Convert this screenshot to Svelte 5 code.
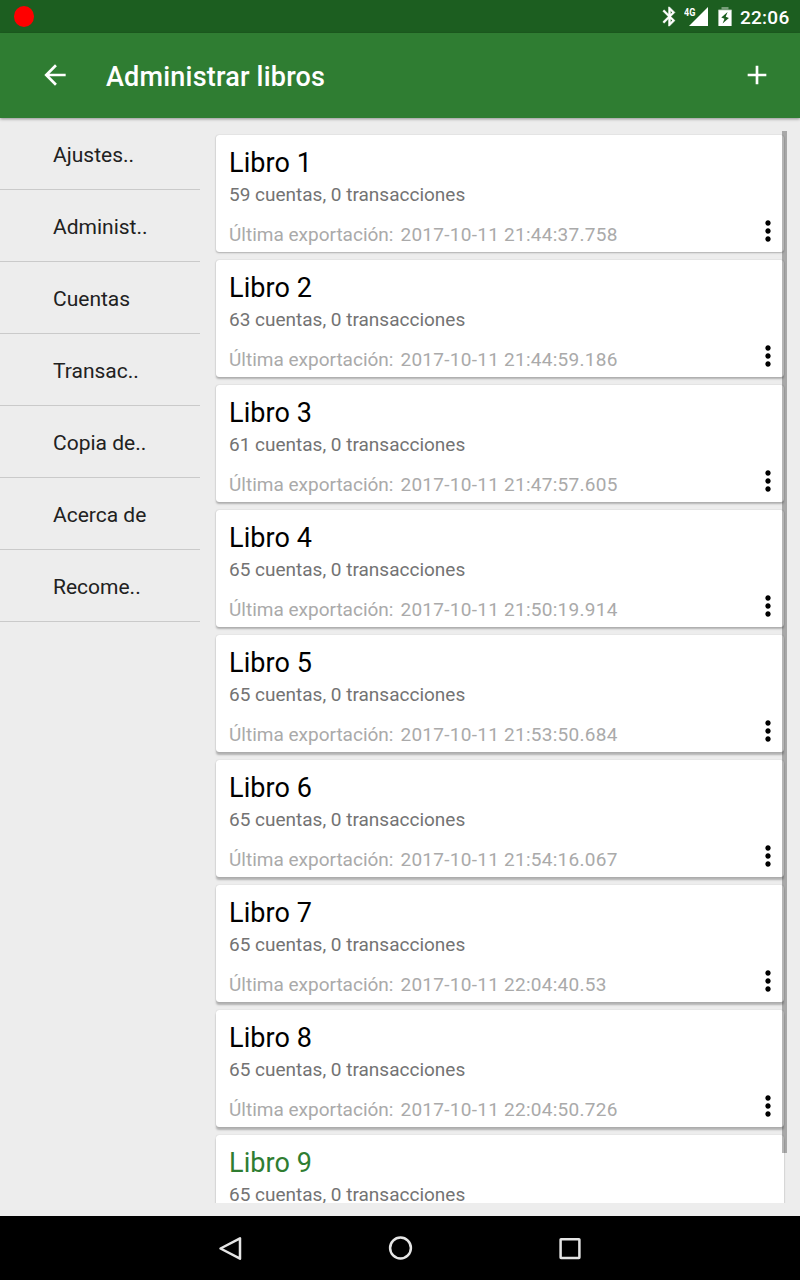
<script>
  const menu = ['Ajustes..', 'Administ..', 'Cuentas', 'Transac..', 'Copia de..', 'Acerca de', 'Recome..'];
  const books = [
    { accounts: 59, exported: '2017-10-11 21:44:37.758' },
    { accounts: 63, exported: '2017-10-11 21:44:59.186' },
    { accounts: 61, exported: '2017-10-11 21:47:57.605' },
    { accounts: 65, exported: '2017-10-11 21:50:19.914' },
    { accounts: 65, exported: '2017-10-11 21:53:50.684' },
    { accounts: 65, exported: '2017-10-11 21:54:16.067' },
    { accounts: 65, exported: '2017-10-11 22:04:40.53' },
    { accounts: 65, exported: '2017-10-11 22:04:50.726' },
    { accounts: 65, exported: '', active: true }
  ];
</script>

<div class="screen">
  <div class="status">
    <span class="record"></span>
    <svg class="bt" width="23" height="23" viewBox="0 0 24 24"><path fill="#fff" stroke="#fff" stroke-width=".5" d="M17.71 7.71L12 2h-1v7.59L6.41 5 5 6.41 10.59 12 5 17.59 6.41 19 11 14.41V22h1l5.71-5.71-4.3-4.29 4.3-4.29zM13 5.83l1.88 1.88L13 9.59V5.83zm1.88 10.46L13 18.17v-3.76l1.88 1.88z" /></svg>
    <div class="signal">
      <span>4G</span>
      <svg width="19" height="19" viewBox="0 0 19 19"><path fill="#fff" d="M0 19H19V0z" /></svg>
    </div>
    <svg class="battery" width="14" height="19" viewBox="0 0 14 19"><path fill="#779e79" d="M3.5 0h7v2.3H13.6V4H.4V2.3h3.1z" /><path fill="#fff" d="M.4 3.2h13.2V19H.4z" /><path fill="#1c5e20" d="M9.6 5L3.3 10.6l3.2 1.2-1.9 4.8 6.3-5.7-3.2-1.2z" /></svg>
    <span class="time">22:06</span>
  </div>
  <header>
    <svg class="back" width="32" height="32" viewBox="0 0 24 24"><path fill="#fff" d="M20 11H7.83l5.59-5.59L12 4l-8 8 8 8 1.41-1.41L7.83 13H20v-2z" /></svg>
    <h1>Administrar libros</h1>
    <svg class="add" width="32" height="32" viewBox="0 0 24 24"><path fill="#fff" d="M19 13h-6v6h-2v-6H5v-2h6V5h2v6h6v2z" /></svg>
  </header>
  <main>
    <nav>
      {#each menu as item}
        <div class="item">{item}</div>
      {/each}
    </nav>
    <section>
      {#each books as book, i}
        <article class:active={book.active} style="--depth: {i / 7}">
          <h2>Libro {i + 1}</h2>
          <p class="summary">{book.accounts} cuentas, 0 transacciones</p>
          {#if book.exported}
            <div class="foot">
              <span class="label">Última exportación:</span>
              <span class="date">{book.exported}</span>
              <svg width="32" height="32" viewBox="0 0 24 24"><path d="M12 8c1.1 0 2-.9 2-2s-.9-2-2-2-2 .9-2 2 .9 2 2 2zm0 2c-1.1 0-2 .9-2 2s.9 2 2 2 2-.9 2-2-.9-2-2-2zm0 6c-1.1 0-2 .9-2 2s.9 2 2 2 2-.9 2-2-.9-2-2-2z" /></svg>
            </div>
          {/if}
        </article>
      {/each}
      <span class="scrollbar"></span>
    </section>
  </main>
  <footer>
    <svg width="170" height="64" viewBox="0 0 170 64"><path d="M95 22.3V42.7L75.5 32.5z" /></svg>
    <svg width="170" height="64" viewBox="0 0 170 64"><circle cx="85.5" cy="32" r="10.4" /></svg>
    <svg width="170" height="64" viewBox="0 0 170 64"><rect x="75.6" y="23.2" width="18.8" height="18.8" rx=".4" /></svg>
  </footer>
</div>

<style>
  :global(body) {
    margin: 0;
  }
  .screen {
    width: 800px;
    height: 1280px;
    display: flex;
    flex-direction: column;
    overflow: hidden;
    background: #ededed;
    font-family: Roboto, sans-serif;
  }
  h1, h2, p {
    margin: 0;
  }
  svg {
    display: block;
    flex: none;
  }
  .status {
    flex: none;
    height: 33px;
    box-sizing: border-box;
    padding: 0 10.5px 0 13.5px;
    display: flex;
    align-items: center;
    background: #1c5e20;
    color: #fff;
  }
  .record {
    width: 20.5px;
    height: 21px;
    border-radius: 50%;
    background: #f00;
    margin-right: auto;
  }
  .bt {
    margin-right: 3px;
  }
  .signal {
    display: flex;
    height: 19px;
    margin-right: 10px;
  }
  .signal span {
    width: 5px;
    font: 700 11px/11px Roboto, sans-serif;
    white-space: nowrap;
    transform: scaleX(.82);
    transform-origin: 0 0;
  }
  .battery {
    margin-right: 8px;
  }
  .time {
    padding-top: 2px;
    font-size: 19px;
    font-weight: 500;
    line-height: 33px;
    letter-spacing: .27px;
  }
  header {
    position: relative;
    z-index: 1;
    flex: none;
    height: 85px;
    box-sizing: border-box;
    padding: 0 27px 1px 38.5px;
    display: flex;
    align-items: center;
    background: #2f7d32;
    color: #fff;
    box-shadow: 0 1px 3px rgba(0, 0, 0, .4);
  }
  h1 {
    flex: 1;
    margin-left: 35.5px;
    padding-top: 3px;
    font-size: 27px;
    font-weight: 500;
    line-height: 32px;
    letter-spacing: .2px;
  }
  main {
    flex: 1;
    min-height: 0;
    display: flex;
    gap: 11px;
  }
  nav {
    width: 200px;
  }
  .item {
    height: 72px;
    box-sizing: border-box;
    padding: 2px 0 0 53px;
    border-bottom: 1px solid #cacaca;
    font-size: 21px;
    line-height: 70px;
    color: #212121;
  }
  section {
    position: relative;
    width: 577px;
    height: 1072px;
    margin-top: 13px;
    padding: 4px 3px 0 5px;
    box-sizing: border-box;
    overflow: hidden;
    display: flex;
    flex-direction: column;
    gap: 8px;
  }
  article {
    flex: none;
    height: 117px;
    box-sizing: border-box;
    width: 568px;
    padding: 12px 0 0 13px;
    border-radius: 3px;
    background: #fff;
    box-shadow: 0 0 1px rgba(0, 0, 0, .25), 0 calc(1px + 2px * var(--depth)) 2px rgba(0, 0, 0, .25);
  }
  h2 {
    font-size: 27px;
    font-weight: 400;
    line-height: 32px;
    letter-spacing: .1px;
    color: #000;
  }
  .active h2 {
    color: #2f7d32;
  }
  .summary {
    font-size: 19px;
    line-height: 32px;
    color: #737373;
  }
  .foot {
    display: flex;
    align-items: center;
    height: 40px;
    font-size: 19px;
    line-height: 32px;
    color: #aaa;
  }
  .foot svg {
    margin-left: auto;
  }
  .foot span {
    padding-top: 8px;
  }
  .label {
    margin-right: 7px;
  }
  .date {
    letter-spacing: .27px;
  }
  .scrollbar {
    position: absolute;
    top: 0;
    right: 1px;
    width: 5px;
    height: 1022px;
    background: rgba(0, 0, 0, .29);
  }
  footer {
    flex: none;
    height: 64px;
    display: flex;
    justify-content: center;
    background: #000;
  }
  footer path, footer circle, footer rect {
    fill: none;
    stroke: #e5e5e5;
    stroke-width: 2.5;
    stroke-linejoin: round;
  }
</style>
